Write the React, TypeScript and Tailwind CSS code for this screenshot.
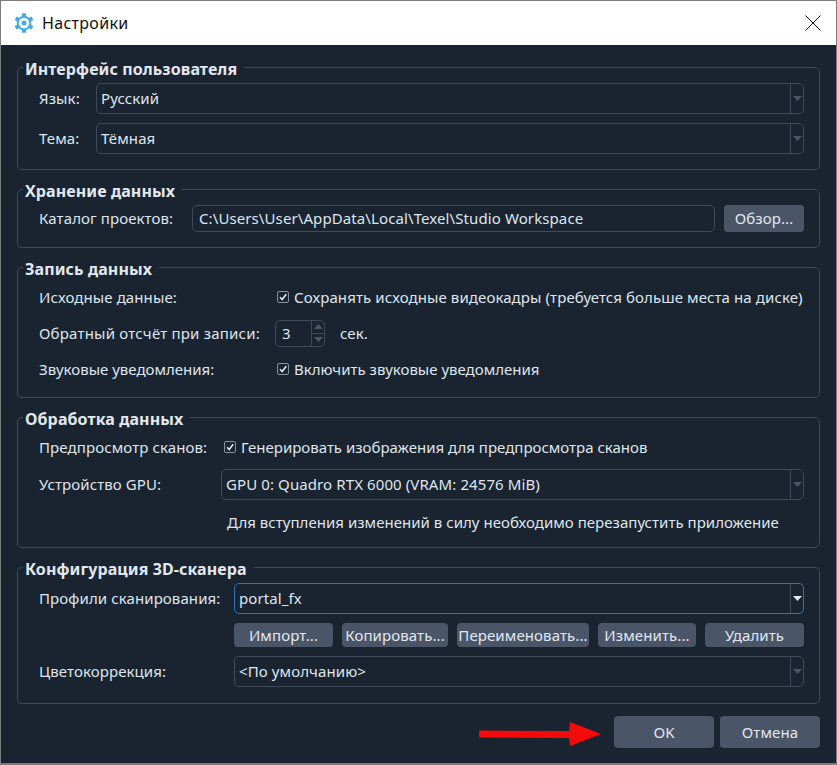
import type { ReactNode } from "react";

const btn = "flex items-center justify-center rounded-[4px] bg-[#4a5568] text-[#e2e8f0]";

const Caret = ({ up = false, bright = false }: { up?: boolean; bright?: boolean }) => (
  <svg width="9" height="5" viewBox="0 0 9 5" className={up ? "rotate-180" : ""}>
    <path d="M0 0h9L4.500 5z" fill={bright ? "#e2e8f0" : "#4a5568"} />
  </svg>
);

const Combo = ({ text, focused = false }: { text: string; focused?: boolean }) => (
  <div className={`flex h-[31px] flex-1 items-stretch rounded-[5px] border ${focused ? "border-[#2b76b9]" : "border-[#3e4a5a]"}`}>
    <div className="flex-1 pl-[4px] leading-[29px]">{text}</div>
    <div className="flex w-[13px] items-center justify-center border-l border-[#3e4a5a]">
      <Caret bright={focused} />
    </div>
  </div>
);

const Group = ({ title, className, children }: { title: string; className: string; children: ReactNode }) => (
  <fieldset className={`flex flex-col rounded-[5px] border border-[#3e4a5a] pl-[21px] pr-[15px] ${className}`}>
    <legend className="-ml-[16px] h-[19px] pl-[2px] pr-[7px] text-[16px] leading-[23px] font-bold tracking-[0.1px] text-[#e2e8f0]">{title}</legend>
    {children}
  </fieldset>
);

const Check = ({ text, tight = false }: { text: string; tight?: boolean }) => (
  <div className="flex items-center gap-[5px]">
    <span className="flex h-[12px] w-[12px] items-center justify-center rounded-[2px] border border-[#8391a3]">
      <svg width="10" height="10" viewBox="0 0 10 10">
        <path d="M2 5.200 4.200 7.500 8.200 2.300" fill="none" stroke="#e2e8f0" strokeWidth="1.600" />
      </svg>
    </span>
    <span className={tight ? "tracking-[0px]" : ""}>{text}</span>
  </div>
);

const GearIcon = () => (
  <svg width="20" height="20" viewBox="0 0 20 20" className="text-[#45ace6]">
    <circle cx="10" cy="10" r="6.300" fill="none" stroke="currentColor" strokeWidth="2" />
    <circle cx="10" cy="10" r="2.500" fill="currentColor" />
    {[0, 60, 120, 180, 240, 300].map((deg) => (
      <rect key={deg} x="7.900" y="0.300" width="4.200" height="3.800" rx="0.600" fill="currentColor" transform={`rotate(${deg} 10 10)`} />
    ))}
  </svg>
);

export default function App() {
  return (
    <div className="relative h-[765px] w-[837px] border-x border-t border-b-2 border-[#7b7b7b] bg-[#1a2430] font-['Noto_Sans','Open_Sans',sans-serif] text-[15px] tracking-[0.1px] text-[#dfe6ee]">
      {/* Title bar */}
      <div className="flex h-[44px] items-center bg-white pl-[13px] pr-[15px] text-[#111]">
        <GearIcon />
        <span className="ml-[8px] text-[16px] tracking-[0.3px]">Настройки</span>
        <svg width="16" height="16" viewBox="0 0 16 16" className="ml-auto">
          <path d="M.5.500 15.500 15.500M15.500.500.500 15.500" stroke="#111" strokeWidth="1" fill="none" />
        </svg>
      </div>

      <div className="flex flex-col gap-[10px] px-[16px] pt-[13px]">
        <Group title="Интерфейс пользователя" className="gap-[9px] pb-[15px] pt-[6px]">
          <div className="flex items-center">
            <span className="w-[57px]">Язык:</span>
            <Combo text="Русский" />
          </div>
          <div className="flex items-center">
            <span className="w-[57px]">Тема:</span>
            <Combo text="Тёмная" />
          </div>
        </Group>

        <Group title="Хранение данных" className="pb-[15px] pt-[6px]">
          <div className="flex items-center">
            <span className="w-[153px]">Каталог проектов:</span>
            <div className="h-[27px] w-[523px] rounded-[5px] border border-[#3e4a5a] pl-[6px] leading-[25px]">
              {"C:\\Users\\User\\AppData\\Local\\Texel\\Studio Workspace"}
            </div>
            <div className={`${btn} ml-[9px] h-[27px] flex-1`}>Обзор...</div>
          </div>
        </Group>

        <Group title="Запись данных" className="pb-[13px] pt-[5px]">
          <div className="flex h-[30px] items-center">
            <span className="w-[238px]">Исходные данные:</span>
            <Check text="Сохранять исходные видеокадры (требуется больше места на диске)" />
          </div>
          <div className="flex h-[42px] items-center">
            <span className="w-[236px] tracking-[0.2px]">Обратный отсчёт при записи:</span>
            <div className="flex h-[27px] w-[50px] rounded-[5px] border border-[#3e4a5a]">
              <span className="flex-1 pl-[6px] leading-[25px]">3</span>
              <div className="flex w-[13px] flex-col border-l border-[#3e4a5a]">
                <div className="flex flex-1 items-center justify-center border-b border-[#3e4a5a]"><Caret up /></div>
                <div className="flex flex-1 items-center justify-center"><Caret /></div>
              </div>
            </div>
            <span className="ml-[15px]">сек.</span>
          </div>
          <div className="flex h-[30px] items-center">
            <span className="w-[238px] tracking-[0px]">Звуковые уведомления:</span>
            <Check text="Включить звуковые уведомления" tight />
          </div>
        </Group>

        <Group title="Обработка данных" className="pb-[15px] pt-[5px]">
          <div className="flex h-[30px] items-center">
            <span className="w-[185px]">Предпросмотр сканов:</span>
            <Check text="Генерировать изображения для предпросмотра сканов" tight />
          </div>
          <div className="mt-[7px] flex items-center">
            <span className="w-[182px]">Устройство GPU:</span>
            <Combo text="GPU 0: Quadro RTX 6000 (VRAM: 24576 MiB)" />
          </div>
          <div className="mt-[12px] pl-[188px] leading-[20px] tracking-[0.03px]">Для вступления изменений в силу необходимо перезапустить приложение</div>
        </Group>

        <Group title="Конфигурация 3D-сканера" className="pb-[16px] pt-[6px]">
          <div className="flex items-center">
            <span className="w-[195px]">Профили сканирования:</span>
            <Combo text="portal_fx" focused />
          </div>
          <div className="ml-[195px] mt-[9px] flex h-[24px] justify-between">
            <div className={`${btn} w-[99px]`}>Импорт...</div>
            <div className={`${btn} w-[106px]`}>Копировать...</div>
            <div className={`${btn} w-[132px]`}>Переименовать...</div>
            <div className={`${btn} w-[98px]`}>Изменить...</div>
            <div className={`${btn} w-[99px]`}>Удалить</div>
          </div>
          <div className="mt-[9px] flex items-center">
            <span className="w-[195px]">Цветокоррекция:</span>
            <Combo text="<По умолчанию>" />
          </div>
        </Group>
      </div>

      {/* Dialog buttons */}
      <div className="mt-[12px] flex justify-end gap-[6px] pr-[16px]">
        <div className={`${btn} h-[32px] w-[100px]`}>OK</div>
        <div className={`${btn} h-[32px] w-[100px]`}>Отмена</div>
      </div>

      {/* Red annotation arrow */}
      <svg width="124" height="26" viewBox="0 0 124 26" className="absolute left-[478px] top-[720px]">
        <path d="M0 9.500 90 10 91 1 122 13 91 25 90 17 0 16.500z" fill="#f40a0a" />
      </svg>
    </div>
  );
}
